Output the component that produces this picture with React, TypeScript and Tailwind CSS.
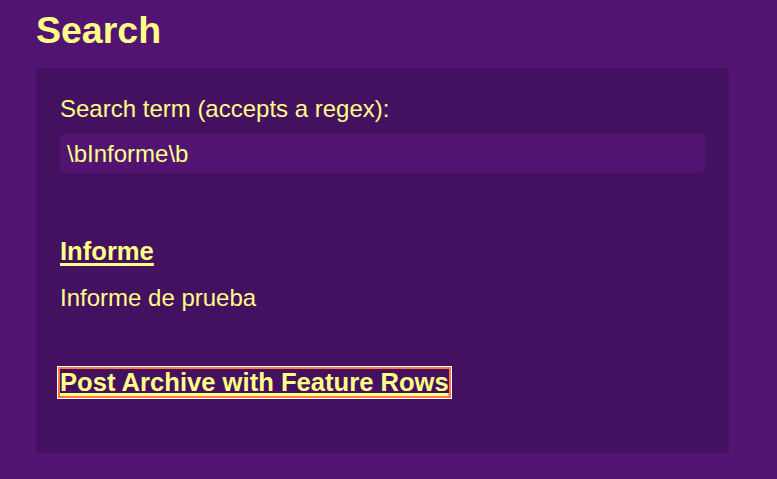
export default function App() {
  return (
    <div className="min-h-screen w-full bg-[#521473] px-9 text-[#ffff88]" style={{ fontFamily: '"Liberation Sans", Arial, sans-serif' }}>
      <h1 className="pt-[6px] text-[37.5px] font-bold leading-[48px]">Search</h1>
      <div className="mt-[14px] mr-[12px] h-[385px] bg-[#441161] px-6 pt-[25px]">
        <label className="block text-[24px] leading-[32px]">Search term (accepts a regex):</label>
        <div className="mt-[9px] flex h-[39px] items-center rounded-[4px] bg-[#521473] px-[7px] text-[24px]">
          \bInforme\b
        </div>
        <div className="mt-[62px]">
          <a href="#" className="text-[25.6px] font-bold leading-[32px] underline decoration-[3px] underline-offset-[3px]">
            Informe
          </a>
          <p className="mt-[15px] text-[24px] leading-[32px]">Informe de prueba</p>
        </div>
        <div className="mt-[55px]">
          <a
            href="#"
            className="inline-block text-[25.6px] font-bold leading-[27px] underline decoration-[3px] underline-offset-[2px] outline-2 outline-[#ff7a3a] shadow-[0_0_0_3px_#ffffff]"
          >
            Post Archive with Feature Rows
          </a>
        </div>
      </div>
    </div>
  );
}
